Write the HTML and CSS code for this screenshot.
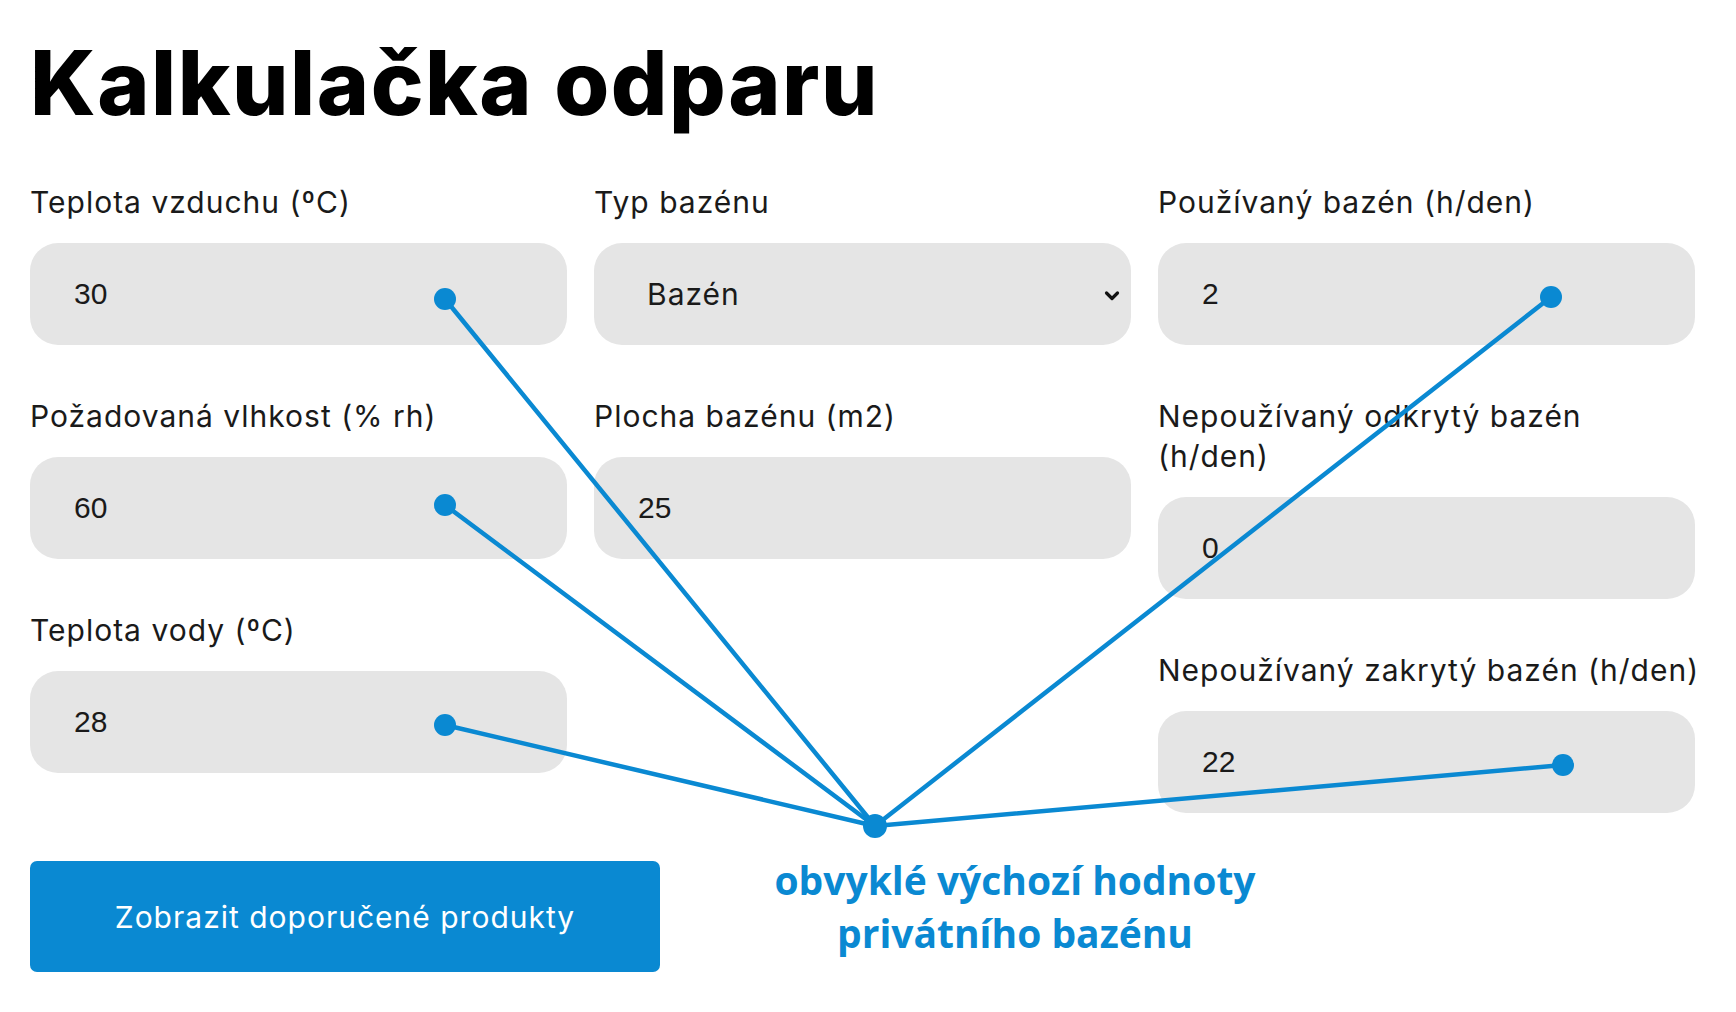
FILE: index.html
```html
<!DOCTYPE html>
<html lang="cs">
<head>
    <meta charset="UTF-8">
    <meta name="viewport" content="width=device-width, initial-scale=1.0">
    <title>Kalkulačka odparu</title>
    <link rel="stylesheet" href="styles.css">
</head>
<body>
    <div class="page">
        <h1>Kalkulačka odparu</h1>

        <div class="calc-grid">
            <div class="calc-col">
                <div class="field">
                    <label for="air-temp">Teplota vzduchu (ºC)</label>
                    <input id="air-temp" class="box" type="text" value="30">
                </div>
                <div class="field">
                    <label for="humidity">Požadovaná vlhkost (% rh)</label>
                    <input id="humidity" class="box" type="text" value="60">
                </div>
                <div class="field">
                    <label for="water-temp">Teplota vody (ºC)</label>
                    <input id="water-temp" class="box" type="text" value="28">
                </div>
                <button class="submit-btn" type="button">Zobrazit doporučené produkty</button>
            </div>

            <div class="calc-col">
                <div class="field">
                    <label>Typ bazénu</label>
                    <div class="box select-box">
                        <span>Bazén</span>
                        <svg class="chevron" width="18" height="12" viewBox="0 0 18 12">
                            <path d="M3.5 3 L9 8.5 L14.5 3" fill="none" stroke="#111" stroke-width="3.2" stroke-linecap="round" stroke-linejoin="round"/>
                        </svg>
                    </div>
                </div>
                <div class="field">
                    <label for="area">Plocha bazénu (m2)</label>
                    <input id="area" class="box" type="text" value="25">
                </div>
            </div>

            <div class="calc-col">
                <div class="field">
                    <label for="used">Používaný bazén (h/den)</label>
                    <input id="used" class="box" type="text" value="2">
                </div>
                <div class="field">
                    <label for="open">Nepoužívaný odkrytý bazén<br>(h/den)</label>
                    <input id="open" class="box" type="text" value="0">
                </div>
                <div class="field">
                    <label for="covered">Nepoužívaný zakrytý bazén (h/den)</label>
                    <input id="covered" class="box" type="text" value="22">
                </div>
            </div>
        </div>

        <!-- callout lines from the default values to the note -->
        <svg class="callout-lines" width="1736" height="1012" viewBox="0 0 1736 1012">
            <g stroke="#0a89d2" stroke-width="4.5" stroke-linecap="round">
                <line x1="875" y1="826" x2="445" y2="299"/>
                <line x1="875" y1="826" x2="445" y2="505"/>
                <line x1="875" y1="826" x2="445" y2="725"/>
                <line x1="875" y1="826" x2="1551" y2="297"/>
                <line x1="875" y1="826" x2="1563" y2="765"/>
            </g>
            <g fill="#0a89d2">
                <circle cx="445" cy="299" r="11"/>
                <circle cx="445" cy="505" r="11"/>
                <circle cx="445" cy="725" r="11"/>
                <circle cx="1551" cy="297" r="11"/>
                <circle cx="1563" cy="765" r="11"/>
                <circle cx="875" cy="826" r="12"/>
            </g>
        </svg>

        <div class="callout-note">obvyklé výchozí hodnoty<br>privátního bazénu</div>
    </div>
</body>
</html>
```

FILE: styles.css
```css
body {
    margin: 0;
    background: #ffffff;
    color: #1a1a1a;
    font-family: 'Inter', sans-serif;
}

.page {
    position: relative;
    width: 1736px;
    height: 1012px;
    padding-left: 30px;
    box-sizing: border-box;
    overflow: hidden;
}

h1 {
    margin: 38px 0 55px 0;
    font-size: 89px;
    line-height: 89px;
    font-weight: 800;
    letter-spacing: 1.5px;
    color: #000000;
}

.calc-grid {
    display: grid;
    grid-template-columns: repeat(3, 537px);
    column-gap: 27px;
    align-items: start;
}

.calc-col {
    display: flex;
    flex-direction: column;
    gap: 51px;
}

.field {
    display: flex;
    flex-direction: column;
    gap: 21px;
}

.field label {
    font-size: 30px;
    line-height: 40px;
    letter-spacing: 1px;
    white-space: nowrap;
    color: #1a1a1a;
}

.box {
    height: 102px;
    box-sizing: border-box;
    border: none;
    border-radius: 28px;
    background: #e5e5e5;
    padding: 0 44px;
    font-family: 'Liberation Sans', Arial, sans-serif;
    font-size: 30px;
    color: #1a1a1a;
    outline: none;
    width: 100%;
}

.select-box {
    display: flex;
    align-items: center;
    justify-content: space-between;
    padding: 0 10px 0 53px;
    font-family: 'Inter', sans-serif;
    font-size: 30px;
    letter-spacing: 1px;
}

.chevron {
    margin-top: 4px;
}

.submit-btn {
    margin-top: 37px;
    width: 630px;
    height: 111px;
    border: none;
    border-radius: 7px;
    background: #0a89d2;
    color: #ffffff;
    font-family: 'Inter', sans-serif;
    font-size: 30px;
    letter-spacing: 1px;
    cursor: pointer;
}

.callout-lines {
    position: absolute;
    top: 0;
    left: 0;
    pointer-events: none;
}

.callout-note {
    position: absolute;
    top: 853px;
    left: 735px;
    width: 560px;
    text-align: center;
    font-family: 'Open Sans', sans-serif;
    font-weight: 700;
    font-size: 39px;
    line-height: 53px;
    color: #0a89d2;
}
```
